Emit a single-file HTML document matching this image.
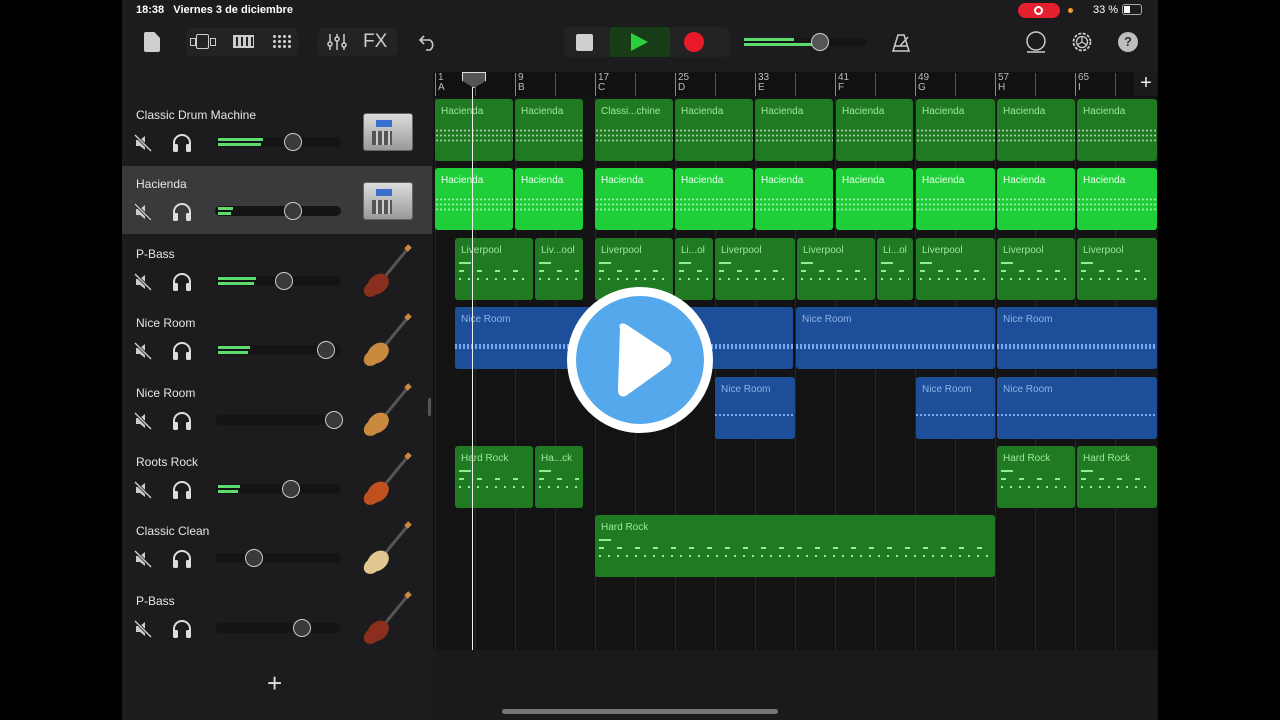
<!DOCTYPE html>
<html><head><meta charset="utf-8"><style>
*{margin:0;padding:0;box-sizing:border-box}
body{width:1280px;height:720px;background:#000;overflow:hidden;position:relative;font-family:"Liberation Sans",sans-serif;color:#ddd}
.a{position:absolute}
#app{left:122px;top:0;width:1036px;height:720px;background:#1c1c1e}
.tname{font-size:12px;color:#e6e6e6}
.reg{position:absolute;border-radius:3px;overflow:hidden;font-size:10px;padding:7px 6px}
.g1{background:#1f7a22;color:#9de89f}
.g2{background:#1fcf3a;color:#e8ffe8}
.bl{background:#1d4e9a;color:#8fb3e8}
</style></head><body>
<div class="a" id="app">
<div class="a" style="left:0;top:0;width:1036px;height:72px;background:#1c1c1e"></div>
</div>
<div class="a" style="left:136px;top:4px;font-size:11px;color:#fff;font-weight:bold">18:38&nbsp;&nbsp;&nbsp;Viernes 3 de diciembre</div>
<div class="a" style="left:1018px;top:3px;width:42px;height:15px;border-radius:8px;background:#e5202e"></div>
<div class="a" style="left:1034px;top:6px;width:9px;height:9px;border-radius:50%;border:2px solid #fff"></div>
<div class="a" style="left:1068px;top:8px;width:5px;height:5px;border-radius:50%;background:#f0a030"></div>
<div class="a" style="left:1093px;top:4px;font-size:11px;color:#fff">33 %</div>
<div class="a" style="left:1122px;top:4px;width:20px;height:11px;border:1px solid #aaa;border-radius:3px"><div style="width:6px;height:7px;margin:1px;background:#fff"></div></div>
<!-- toolbar -->
<div class="a" style="left:144px;top:32px;width:16px;height:20px;background:#cfcfcf;border-radius:2px;clip-path:polygon(0 0,65% 0,100% 30%,100% 100%,0 100%)"></div>
<div class="a" style="left:186px;top:28px;width:112px;height:28px;background:#232325;border-radius:5px"></div>
<div class="a" style="left:190px;top:38px;width:6px;height:8px;border:1px solid #ccc"></div>
<div class="a" style="left:196px;top:34px;width:13px;height:15px;border:1.5px solid #ccc;border-radius:2px"></div>
<div class="a" style="left:210px;top:38px;width:6px;height:8px;border:1px solid #ccc"></div>
<div class="a" style="left:233px;top:35px;width:21px;height:13px;border-top:2px solid #ccc;border-bottom:2px solid #ccc;background:repeating-linear-gradient(90deg,#ccc 0 3px,#232325 3px 5px)"></div>
<div class="a" style="left:272px;top:34px;width:19px;height:16px;background:radial-gradient(circle,#ccc 1.3px,transparent 1.8px) 0 0/5px 5px"></div>
<div class="a" style="left:318px;top:28px;width:80px;height:28px;background:#232325;border-radius:5px"></div>
<svg class="a" style="left:326px;top:32px" width="22" height="20"><g stroke="#ccc" stroke-width="1.5" fill="none"><path d="M4 2V18M11 2V18M18 2V18"/><circle cx="4" cy="12" r="2" fill="#232325"/><circle cx="11" cy="7" r="2" fill="#232325"/><circle cx="18" cy="13" r="2" fill="#232325"/></g></svg>
<div class="a" style="left:363px;top:31px;font-size:19px;color:#ccc">FX</div>
<svg class="a" style="left:417px;top:31px" width="22" height="22"><path d="M3 9H13A6 6 0 0 1 13 19H9M7 5L3 9L7 13" stroke="#ccc" stroke-width="1.6" fill="none"/></svg>
<div class="a" style="left:564px;top:27px;width:166px;height:30px;background:#222224;border-radius:5px"></div>
<div class="a" style="left:576px;top:34px;width:17px;height:17px;background:#cfcfcf;border-radius:2px"></div>
<div class="a" style="left:610px;top:27px;width:60px;height:30px;background:#173d17;border-radius:4px"></div>
<div class="a" style="left:631px;top:33px;width:0;height:0;border-left:17px solid #2ad13e;border-top:9px solid transparent;border-bottom:9px solid transparent"></div>
<div class="a" style="left:684px;top:32px;width:20px;height:20px;border-radius:50%;background:#ea1a2b"></div>
<div class="a" style="left:744px;top:38px;width:123px;height:8px;background:#151515;border-radius:4px"></div>
<div class="a" style="left:744px;top:38px;width:50px;height:3px;background:#5edb6e"></div>
<div class="a" style="left:744px;top:43px;width:72px;height:3px;background:#5edb6e"></div>
<div class="a" style="left:811px;top:33px;width:18px;height:18px;border-radius:50%;background:#555;border:1px solid #ccc"></div>
<svg class="a" style="left:890px;top:31px" width="22" height="22"><path d="M3 20L8 4H14L19 20ZM5 15H17M10 15L18 6" stroke="#ccc" stroke-width="1.5" fill="none"/></svg>
<svg class="a" style="left:1024px;top:30px" width="24" height="24"><circle cx="12" cy="11" r="9" stroke="#ccc" stroke-width="1.5" fill="none"/><path d="M3 22H21" stroke="#ccc" stroke-width="1.5"/></svg>
<svg class="a" style="left:1071px;top:31px" width="22" height="22"><circle cx="11" cy="11" r="8.5" stroke="#ccc" stroke-width="1.8" fill="none" stroke-dasharray="3 1.5"/><circle cx="11" cy="11" r="5.5" stroke="#ccc" stroke-width="1.3" fill="none"/><path d="M11 11V5M11 11L6 14M11 11L16 14" stroke="#ccc" stroke-width="1.3"/></svg>
<div class="a" style="left:1118px;top:32px;width:20px;height:20px;border-radius:50%;background:#bdbdbd;color:#333;font-size:13px;font-weight:bold;text-align:center;line-height:20px">?</div>
<!-- ruler -->
<div class="a" style="left:433px;top:72px;width:725px;height:25px;background:#111"></div>
<div id="ruler"></div>
<div class="a" style="left:1134px;top:72px;width:24px;height:24px;background:#1a1a1a;color:#eee;font-size:20px;text-align:center;line-height:22px">+</div>
<!-- timeline bg -->
<div class="a" style="left:433px;top:97px;width:725px;height:623px;background:#131313"></div>
<div id="grid"></div>
<div class="a" style="left:122px;top:97px;width:310px;height:623px;background:#1c1c1e"></div>
<div class="a" style="left:122px;top:166px;width:310px;height:68px;background:#3a3a3c"></div>
<div class="a" style="left:428px;top:398px;width:3px;height:18px;background:#555;border-radius:2px"></div>
<div id="tracks"></div>
<div id="regs"></div>
<div class="a" style="left:472px;top:86px;width:1px;height:564px;background:#eee"></div>
<div class="a" style="left:462px;top:72px;width:24px;height:16px;background:#555;border:1px solid #ddd;clip-path:polygon(0 0,100% 0,100% 55%,50% 100%,0 55%)"></div>
<div class="a" style="left:267px;top:668px;font-size:26px;color:#ddd;font-weight:200">+</div>
<div class="a" style="left:502px;top:709px;width:276px;height:5px;border-radius:3px;background:#777"></div>
<!-- play overlay -->
<div class="a" style="left:567px;top:287px;width:146px;height:146px;border-radius:50%;background:#fff"></div>
<div class="a" style="left:576px;top:296px;width:128px;height:128px;border-radius:50%;background:#55a8ec"></div>
<svg class="a" style="left:612px;top:320px" width="64" height="80"><path d="M10 8Q8 4 13 6L55 34Q60 40 55 44L13 74Q8 76 8 70Z" fill="#fff" stroke="#fff" stroke-width="4" stroke-linejoin="round"/></svg>
<script>
var h='';
var L='ABCDEFGHI';
for(var i=0;i<9;i++){var x=435+i*80;
h+='<div class="a" style="left:'+x+'px;top:73px;width:1px;height:23px;background:#888"></div><div class="a" style="left:'+(x+3)+'px;top:73px;font-size:10px;color:#bbb;line-height:10px">'+(1+i*8)+'<br>'+L[i]+'</div>';
h+='<div class="a" style="left:'+(x+40)+'px;top:73px;width:1px;height:23px;background:#555"></div>';}
document.getElementById('ruler').innerHTML=h;
h='';for(var i=0;i<18;i++){var x=435+i*40;h+='<div class="a" style="left:'+x+'px;top:97px;width:1px;height:553px;background:#262626"></div>';}
h+='<div class="a" style="left:433px;top:650px;width:725px;height:70px;background:#1a1a1a"></div>';
document.getElementById('grid').innerHTML=h;
var T=[['Classic Drum Machine',45,78,'d'],['Hacienda',15,78,'d'],['P-Bass',38,69,'b'],['Nice Room',32,111,'a'],['Nice Room',0,119,'a'],['Roots Rock',22,76,'e'],['Classic Clean',0,39,'h'],['P-Bass',0,87,'b']];
h='';
T.forEach(function(t,i){var y=97+i*69.4;
h+='<div class="a tname" style="left:136px;top:'+(y+11)+'px">'+t[0]+'</div>';
h+='<svg class="a" style="left:134px;top:'+(y+37)+'px" width="18" height="18"><path d="M2 6H6L11 2V16L6 12H2Z" fill="#ccc"/><path d="M1 1L17 17" stroke="#1c1c1e" stroke-width="3"/><path d="M1 1L17 17" stroke="#ccc" stroke-width="1.4"/></svg>';
h+='<svg class="a" style="left:171px;top:'+(y+36)+'px" width="22" height="20"><path d="M3 15V10A8 8 0 0 1 19 10V15" stroke="#ddd" stroke-width="2" fill="none"/><rect x="2" y="11" width="5" height="8" rx="1.5" fill="#ddd"/><rect x="15" y="11" width="5" height="8" rx="1.5" fill="#ddd"/></svg>';
h+='<div class="a" style="left:215px;top:'+(y+40)+'px;width:126px;height:10px;background:#141414;border-radius:5px"></div>';
if(t[1])h+='<div class="a" style="left:218px;top:'+(y+41)+'px;width:'+t[1]+'px;height:3px;background:#5edb6e"></div><div class="a" style="left:218px;top:'+(y+46)+'px;width:'+(t[1]-2)+'px;height:3px;background:#5edb6e"></div>';
h+='<div class="a" style="left:'+(215+t[2]-9)+'px;top:'+(y+36)+'px;width:18px;height:18px;border-radius:50%;background:#3a3a3a;border:1px solid #ccc"></div>';
if(t[3]=='d')h+='<div class="a" style="left:363px;top:'+(y+16)+'px;width:50px;height:38px;background:linear-gradient(#ddd,#999);border-radius:3px;border:1px solid #666"><div style="margin:6px 0 0 12px;width:16px;height:7px;background:#3a6fd0"></div><div style="margin:4px 0 0 8px;width:20px;height:14px;background:repeating-linear-gradient(90deg,#555 0 4px,#ccc 4px 6px)"></div></div>';
else{var c=t[3]=='a'?'#c98a3e':t[3]=='e'?'#c0501e':t[3]=='h'?'#e0c890':'#8a2e1e';
h+='<svg class="a" style="left:360px;top:'+(y+6)+'px" width="56" height="56"><path d="M50 4L22 38" stroke="#555" stroke-width="3"/><path d="M50 4L46 8" stroke="#c98a3e" stroke-width="5"/><ellipse cx="18" cy="42" rx="12" ry="9" transform="rotate(-40 18 42)" fill="'+c+'"/><ellipse cx="12" cy="47" rx="9" ry="7" transform="rotate(-40 12 47)" fill="'+c+'"/></svg>';}
});
document.getElementById('tracks').innerHTML=h;
var R=[
[0,'g1',[[435,513,'Hacienda'],[515,583,'Hacienda'],[595,673,'Classi...chine'],[675,753,'Hacienda'],[755,833,'Hacienda'],[836,913,'Hacienda'],[916,995,'Hacienda'],[997,1075,'Hacienda'],[1077,1157,'Hacienda']]],
[1,'g2',[[435,513,'Hacienda'],[515,583,'Hacienda'],[595,673,'Hacienda'],[675,753,'Hacienda'],[755,833,'Hacienda'],[836,913,'Hacienda'],[916,995,'Hacienda'],[997,1075,'Hacienda'],[1077,1157,'Hacienda']]],
[2,'g1',[[455,533,'Liverpool'],[535,583,'Liv...ool'],[595,673,'Liverpool'],[675,713,'Li...ol'],[715,795,'Liverpool'],[797,875,'Liverpool'],[877,913,'Li...ol'],[916,995,'Liverpool'],[997,1075,'Liverpool'],[1077,1157,'Liverpool']]],
[3,'bl',[[455,793,'Nice Room'],[796,995,'Nice Room'],[997,1157,'Nice Room']]],
[4,'bl',[[715,795,'Nice Room'],[916,995,'Nice Room'],[997,1157,'Nice Room']]],
[5,'g1',[[455,533,'Hard Rock'],[535,583,'Ha...ck'],[997,1075,'Hard Rock'],[1077,1157,'Hard Rock']]],
[6,'g1',[[595,995,'Hard Rock']]]];
h='';
R.forEach(function(r){var y=99+r[0]*69.4;r[2].forEach(function(g){
var w=g[1]-g[0];var inner='';
if(r[1]=='bl')inner='<div style="position:absolute;left:0;right:0;top:37px;height:'+(r[0]==3?5:2)+'px;background:repeating-linear-gradient(90deg,#7aa8f0 0 2px,transparent 2px 4px)"></div>';
else if(r[0]<2)inner='<div style="position:absolute;left:0;right:0;top:29px;height:15px;background:radial-gradient(circle,rgba(255,255,255,.6) 0.8px,transparent 1.2px) 0 0/4px 5px"></div>';
else inner='<div style="position:absolute;left:4px;right:4px;top:24px;height:22px;background:linear-gradient(90deg,#8ef08e 0 12px,transparent 12px 24px) 0 0/48px 2px no-repeat,repeating-linear-gradient(90deg,#8ef08e 0 5px,transparent 5px 18px) 0 8px/100% 2px no-repeat,repeating-linear-gradient(90deg,#8ef08e 0 2px,transparent 2px 9px) 0 16px/100% 2px no-repeat"></div>';
h+='<div class="reg '+r[1]+'" style="left:'+g[0]+'px;top:'+y+'px;width:'+w+'px;height:62px">'+g[2]+inner+'</div>';});});
document.getElementById('regs').innerHTML=h;
</script>
</body></html>
